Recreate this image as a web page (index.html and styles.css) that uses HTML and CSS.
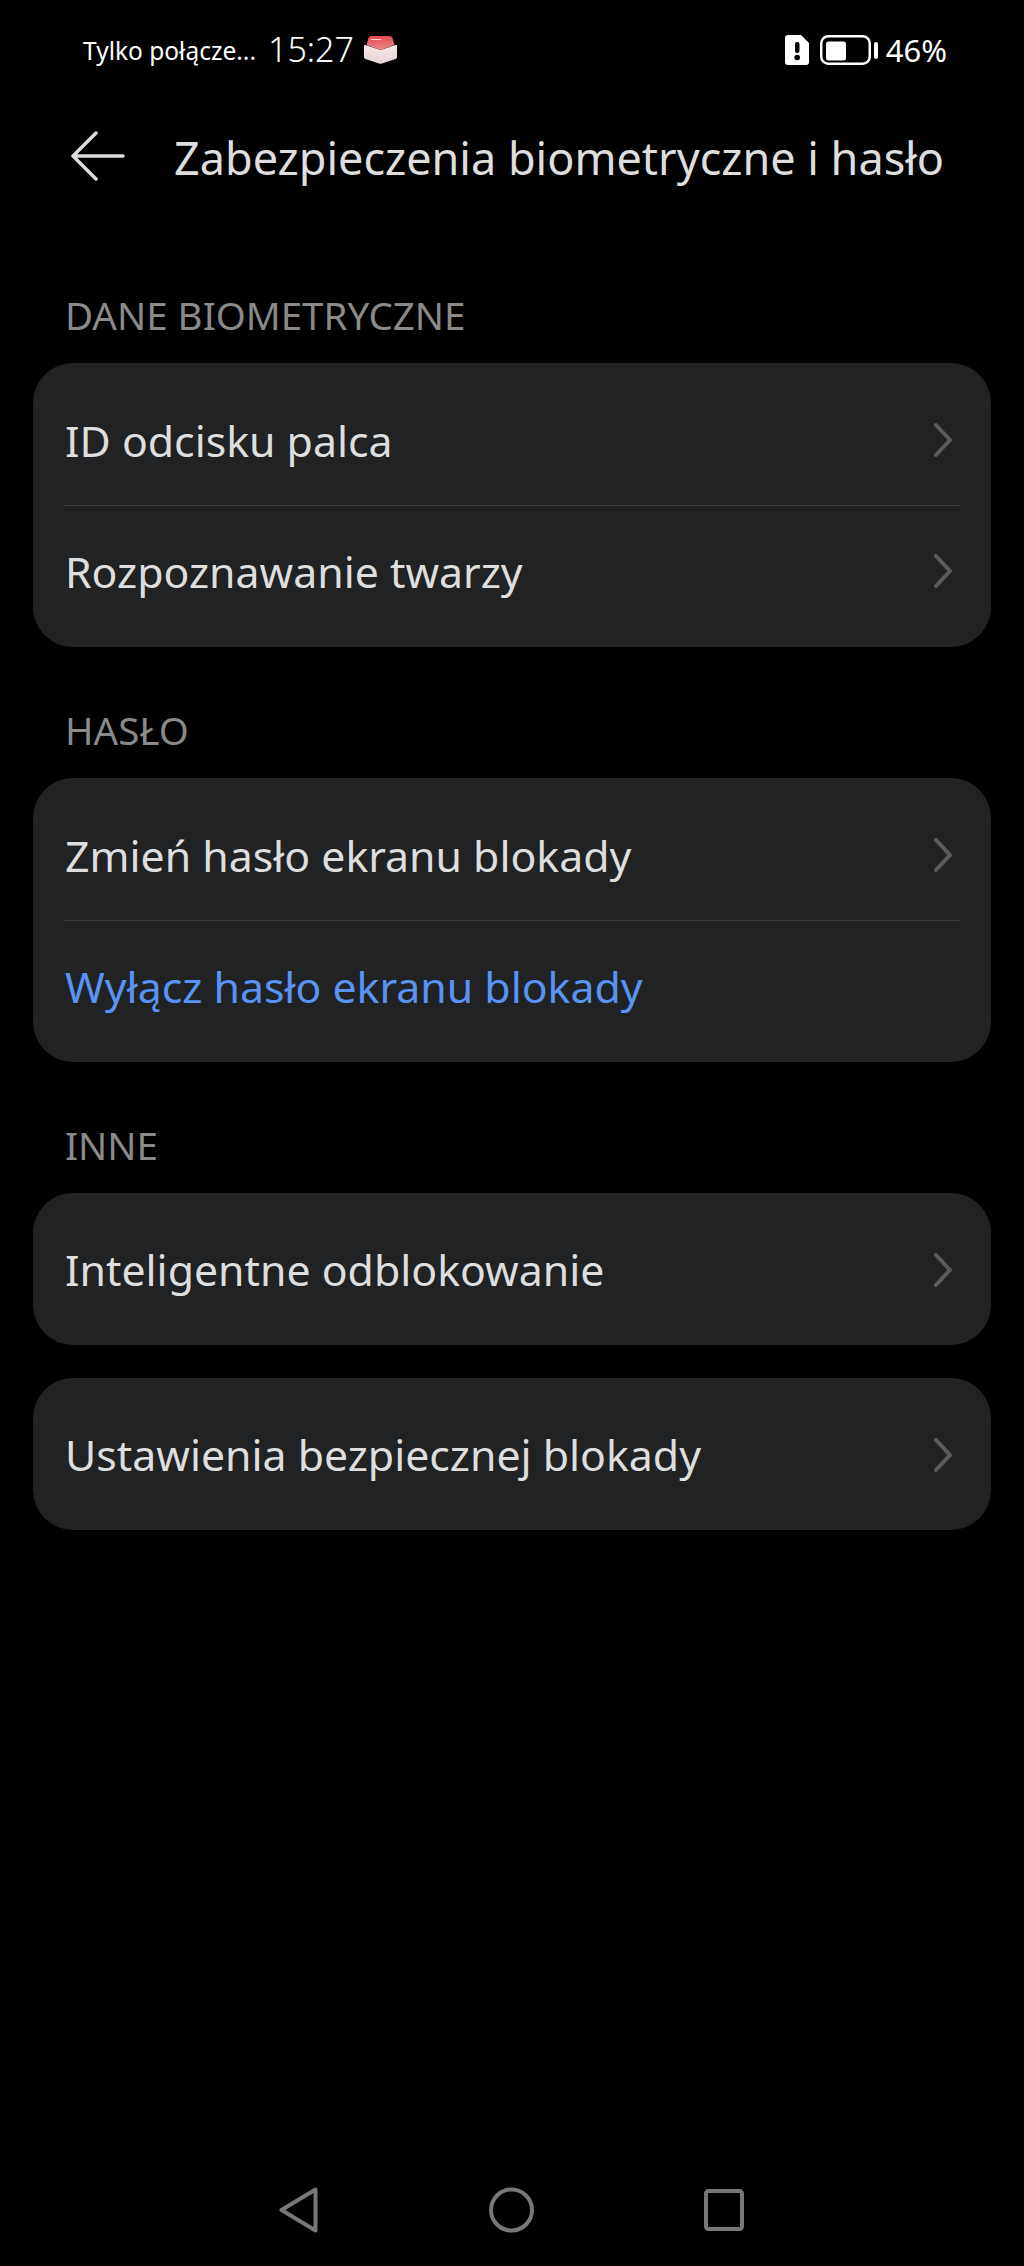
FILE: index.html
```html
<!DOCTYPE html>
<html lang="pl">
<head>
  <meta charset="UTF-8">
  <meta name="viewport" content="width=device-width, initial-scale=1.0">
  <title>Zabezpieczenia biometryczne i hasło</title>
  <link rel="stylesheet" href="styles.css">
</head>
<body>
  <div class="status-bar">
    <div class="status-left">
      <span class="carrier">Tylko połącze...</span>
      <span class="clock">15:27</span>
      <svg class="box-icon" width="33" height="28" viewBox="0 0 33 28">
        <defs>
          <linearGradient id="lid" x1="0" y1="0" x2="0" y2="1">
            <stop offset="0" stop-color="#e5484f"/>
            <stop offset="1" stop-color="#ee8a8a"/>
          </linearGradient>
          <linearGradient id="side" x1="0" y1="0" x2="0" y2="1">
            <stop offset="0" stop-color="#f6e8e8"/>
            <stop offset="1" stop-color="#e6d3d5"/>
          </linearGradient>
        </defs>
        <path d="M0 10 Q0 8.500 1.500 9 L16.500 14 L31.500 9 Q33 8.500 33 10 V21 Q33 22.500 31.500 23 L18 27.500 Q16.500 28 15 27.500 L1.500 23 Q0 22.500 0 21 Z" fill="url(#side)"/>
        <path d="M2.500 9 L4.500 2 Q5 0 8 0 H25 Q28 0 28.500 2 L30.500 9 L16.500 14 Z" fill="url(#lid)"/>
        <rect x="7" y="3" width="10" height="1" fill="#fff" opacity="0.7"/>
      </svg>
    </div>
    <div class="status-right">
      <svg width="24" height="30" viewBox="0 0 24 30">
        <path d="M3 0 H16 L24 8 V27 Q24 30 21 30 H3 Q0 30 0 27 V3 Q0 0 3 0 Z" fill="#fff"/>
        <rect x="10" y="7" width="4.500" height="11" rx="2" fill="#000"/>
        <circle cx="12.200" cy="22.500" r="2.800" fill="#000"/>
      </svg>
      <svg class="battery" width="58" height="30" viewBox="0 0 58 30">
        <rect x="1.250" y="1.250" width="48.500" height="27.500" rx="7" fill="none" stroke="#fff" stroke-width="2.500"/>
        <rect x="6" y="6.500" width="20" height="19" rx="2.500" fill="#fff"/>
        <rect x="54" y="7" width="4" height="17" rx="2" fill="#fff"/>
      </svg>
      <span class="battery-level">46%</span>
    </div>
  </div>

  <header class="title-bar">
    <svg class="back" width="54" height="50" viewBox="0 0 54 50">
      <path d="M52 25 H3 M25 2 L2 25 L25 48" fill="none" stroke="#dcdcdc" stroke-width="3.500" stroke-linecap="round" stroke-linejoin="round"/>
    </svg>
    <h1>Zabezpieczenia biometryczne i hasło</h1>
  </header>

  <main>
    <h2 class="first">DANE BIOMETRYCZNE</h2>
    <div class="card">
      <div class="row">
        <span>ID odcisku palca</span>
        <svg class="chevron" width="18" height="34" viewBox="0 0 18 34"><path d="M2 2 L16 17 L2 32"/></svg>
      </div>
      <div class="divider"></div>
      <div class="row">
        <span>Rozpoznawanie twarzy</span>
        <svg class="chevron" width="18" height="34" viewBox="0 0 18 34"><path d="M2 2 L16 17 L2 32"/></svg>
      </div>
    </div>

    <h2>HASŁO</h2>
    <div class="card">
      <div class="row">
        <span>Zmień hasło ekranu blokady</span>
        <svg class="chevron" width="18" height="34" viewBox="0 0 18 34"><path d="M2 2 L16 17 L2 32"/></svg>
      </div>
      <div class="divider"></div>
      <div class="row link">
        <span>Wyłącz hasło ekranu blokady</span>
      </div>
    </div>

    <h2>INNE</h2>
    <div class="card">
      <div class="row single">
        <span>Inteligentne odblokowanie</span>
        <svg class="chevron" width="18" height="34" viewBox="0 0 18 34"><path d="M2 2 L16 17 L2 32"/></svg>
      </div>
    </div>
    <div class="card spaced">
      <div class="row single">
        <span>Ustawienia bezpiecznej blokady</span>
        <svg class="chevron" width="18" height="34" viewBox="0 0 18 34"><path d="M2 2 L16 17 L2 32"/></svg>
      </div>
    </div>
  </main>

  <nav class="nav-bar">
    <svg width="39" height="46" viewBox="0 0 39 46"><path d="M36.500 2.500 V43.500 L2.500 23 Z"/></svg>
    <svg width="45" height="46" viewBox="0 0 45 46"><circle cx="22.500" cy="23" r="20.500"/></svg>
    <svg width="40" height="42" viewBox="0 0 40 42"><rect x="2" y="2" width="36" height="38" rx="2.500"/></svg>
  </nav>
</body>
</html>
```

FILE: styles.css
```css
body {
  margin: 0;
  height: 2266px;
  background: #000;
  color: #dedede;
  font-family: 'Noto Sans', sans-serif;
  display: flex;
  flex-direction: column;
  overflow: hidden;
}
.status-bar {
  height: 30px;
  margin-top: 35px;
  padding: 0 77px 0 83px;
  display: flex;
  justify-content: space-between;
  align-items: center;
  color: #fff;
}
.status-left, .status-right {
  display: flex;
  align-items: center;
}
.carrier {
  font-size: 24.500px;
}
.clock {
  font-size: 34px;
  margin: 0 0 3px 12px;
  font-weight: 300;
}
.box-icon {
  margin-left: 10px;
}
.battery {
  margin-left: 11px;
}
.battery-level {
  font-size: 31px;
  margin-left: 8px;
}
.title-bar {
  display: flex;
  align-items: center;
  height: 60px;
  margin-top: 61px;
  padding-left: 71px;
}
.title-bar h1 {
  font-size: 45px;
  font-weight: 400;
  margin: 3px 0 0 49px;
  white-space: nowrap;
}
main {
  padding: 0 33px;
}
h2 {
  font-size: 38.500px;
  font-weight: 400;
  color: #8a8a8a;
  margin: 61px 0 22px;
  padding: 0 32px;
  height: 48px;
  line-height: 45px;
}
h2.first {
  margin-top: 107px;
}
.card {
  background: #212224;
  border-radius: 40px;
  padding: 12px 31px 11px;
}
.card.spaced {
  margin-top: 33px;
}
.row {
  height: 130px;
  display: flex;
  align-items: center;
  justify-content: space-between;
  font-size: 42.800px;
}
.row span {
  margin-left: 1px;
}
.row.single {
  height: 129px;
}
.row.link {
  color: #5a93f2;
}
.divider {
  height: 1px;
  background: #3d3e40;
}
.chevron {
  margin-right: 8px;
  fill: none;
  stroke: #5b5b5c;
  stroke-width: 4;
  stroke-linecap: round;
  stroke-linejoin: round;
}
.nav-bar {
  margin-top: auto;
  height: 46px;
  padding: 0 280px 33px 279px;
  display: flex;
  justify-content: space-between;
  align-items: center;
}
.nav-bar svg {
  fill: none;
  stroke: #787878;
  stroke-width: 4;
  stroke-linejoin: round;
}
```
